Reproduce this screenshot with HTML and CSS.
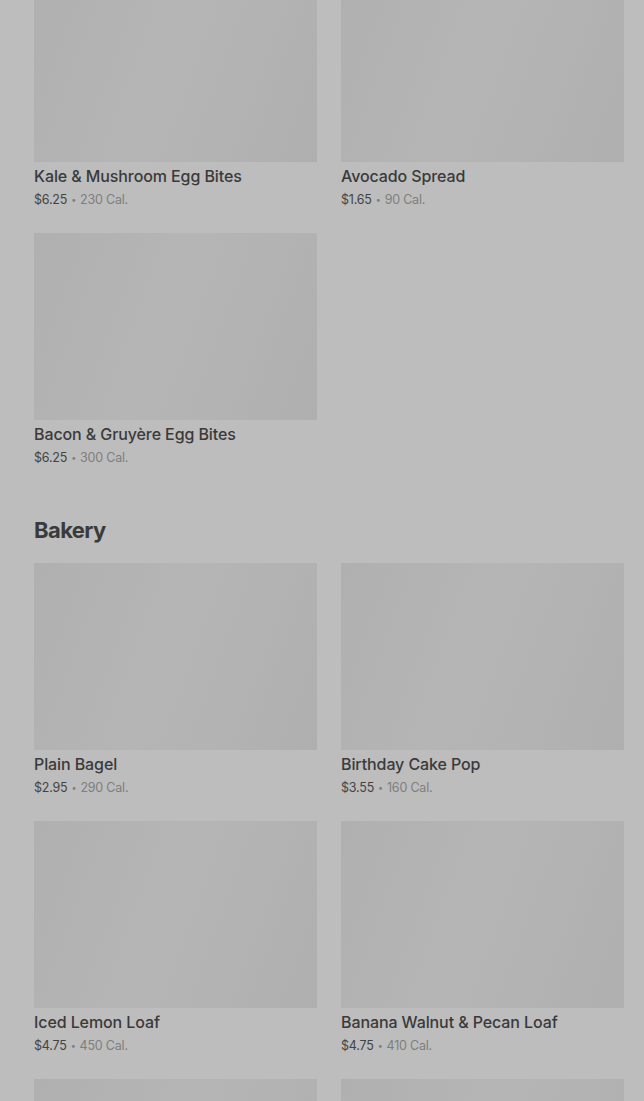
FILE: index.html
```html
<!DOCTYPE html>
<html lang="en">
<head>
<meta charset="utf-8">
<title>Menu</title>
<link rel="stylesheet" href="styles.css">
</head>
<body>
<main class="menu">
  <section class="section first">
    <div class="grid">
      <div class="card"><div class="thumb"></div><div class="name">Kale &amp; Mushroom Egg Bites</div><div class="meta"><span class="price">$6.25</span><span class="dot">•</span><span class="cal">230 Cal.</span></div></div>
      <div class="card"><div class="thumb"></div><div class="name">Avocado Spread</div><div class="meta"><span class="price">$1.65</span><span class="dot">•</span><span class="cal">90 Cal.</span></div></div>
      <div class="card"><div class="thumb"></div><div class="name">Bacon &amp; Gruyère Egg Bites</div><div class="meta"><span class="price">$6.25</span><span class="dot">•</span><span class="cal">300 Cal.</span></div></div>
    </div>
  </section>
  <section class="section">
    <h2 class="heading">Bakery</h2>
    <div class="grid">
      <div class="card"><div class="thumb"></div><div class="name">Plain Bagel</div><div class="meta"><span class="price">$2.95</span><span class="dot">•</span><span class="cal">290 Cal.</span></div></div>
      <div class="card"><div class="thumb"></div><div class="name">Birthday Cake Pop</div><div class="meta"><span class="price">$3.55</span><span class="dot">•</span><span class="cal">160 Cal.</span></div></div>
      <div class="card"><div class="thumb"></div><div class="name">Iced Lemon Loaf</div><div class="meta"><span class="price">$4.75</span><span class="dot">•</span><span class="cal">450 Cal.</span></div></div>
      <div class="card"><div class="thumb"></div><div class="name">Banana Walnut &amp; Pecan Loaf</div><div class="meta"><span class="price">$4.75</span><span class="dot">•</span><span class="cal">410 Cal.</span></div></div>
      <div class="card"><div class="thumb"></div></div>
      <div class="card"><div class="thumb"></div></div>
    </div>
  </section>
</main>
</body>
</html>
```
FILE: styles.css
```css
html, body {
  margin: 0;
  padding: 0;
  background: #bdbdbd;
  overflow: hidden;
  height: 1101px;
}
body {
  font-family: Inter, "Noto Sans", "Liberation Sans", sans-serif;
  color: #3a3a3a;
}
.menu {
  padding: 0 20px 0 34px;
  margin-top: -25px;
}
.section {
  margin: 0;
}
.grid {
  display: grid;
  grid-template-columns: 283px 283px;
  column-gap: 24px;
  row-gap: 23px;
}
.thumb {
  height: 187px;
  background: linear-gradient(110deg, #b0b0b0 0%, #b5b5b5 45%, #b3b3b3 70%, #afafaf 100%);
}
.name {
  padding-top: 4px;
  font-size: 16px;
  line-height: 20px;
  font-weight: 500;
  color: #3a3a3a;
  letter-spacing: -0.1px;
}
.meta {
  margin-top: 4px;
  font-size: 12.5px;
  line-height: 20px;
  letter-spacing: -0.2px;
  color: #7e7e7e;
}
.price {
  color: #434343;
}
.dot {
  font-size: 9px;
  margin: 0 4px;
  color: #7e7e7e;
  vertical-align: 1px;
}
.cal {
  color: #7e7e7e;
}
.heading {
  margin: 48px 0 19px;
  font-size: 22px;
  line-height: 28px;
  font-weight: 700;
  letter-spacing: -0.6px;
  color: #3a3a3a;
}
```
